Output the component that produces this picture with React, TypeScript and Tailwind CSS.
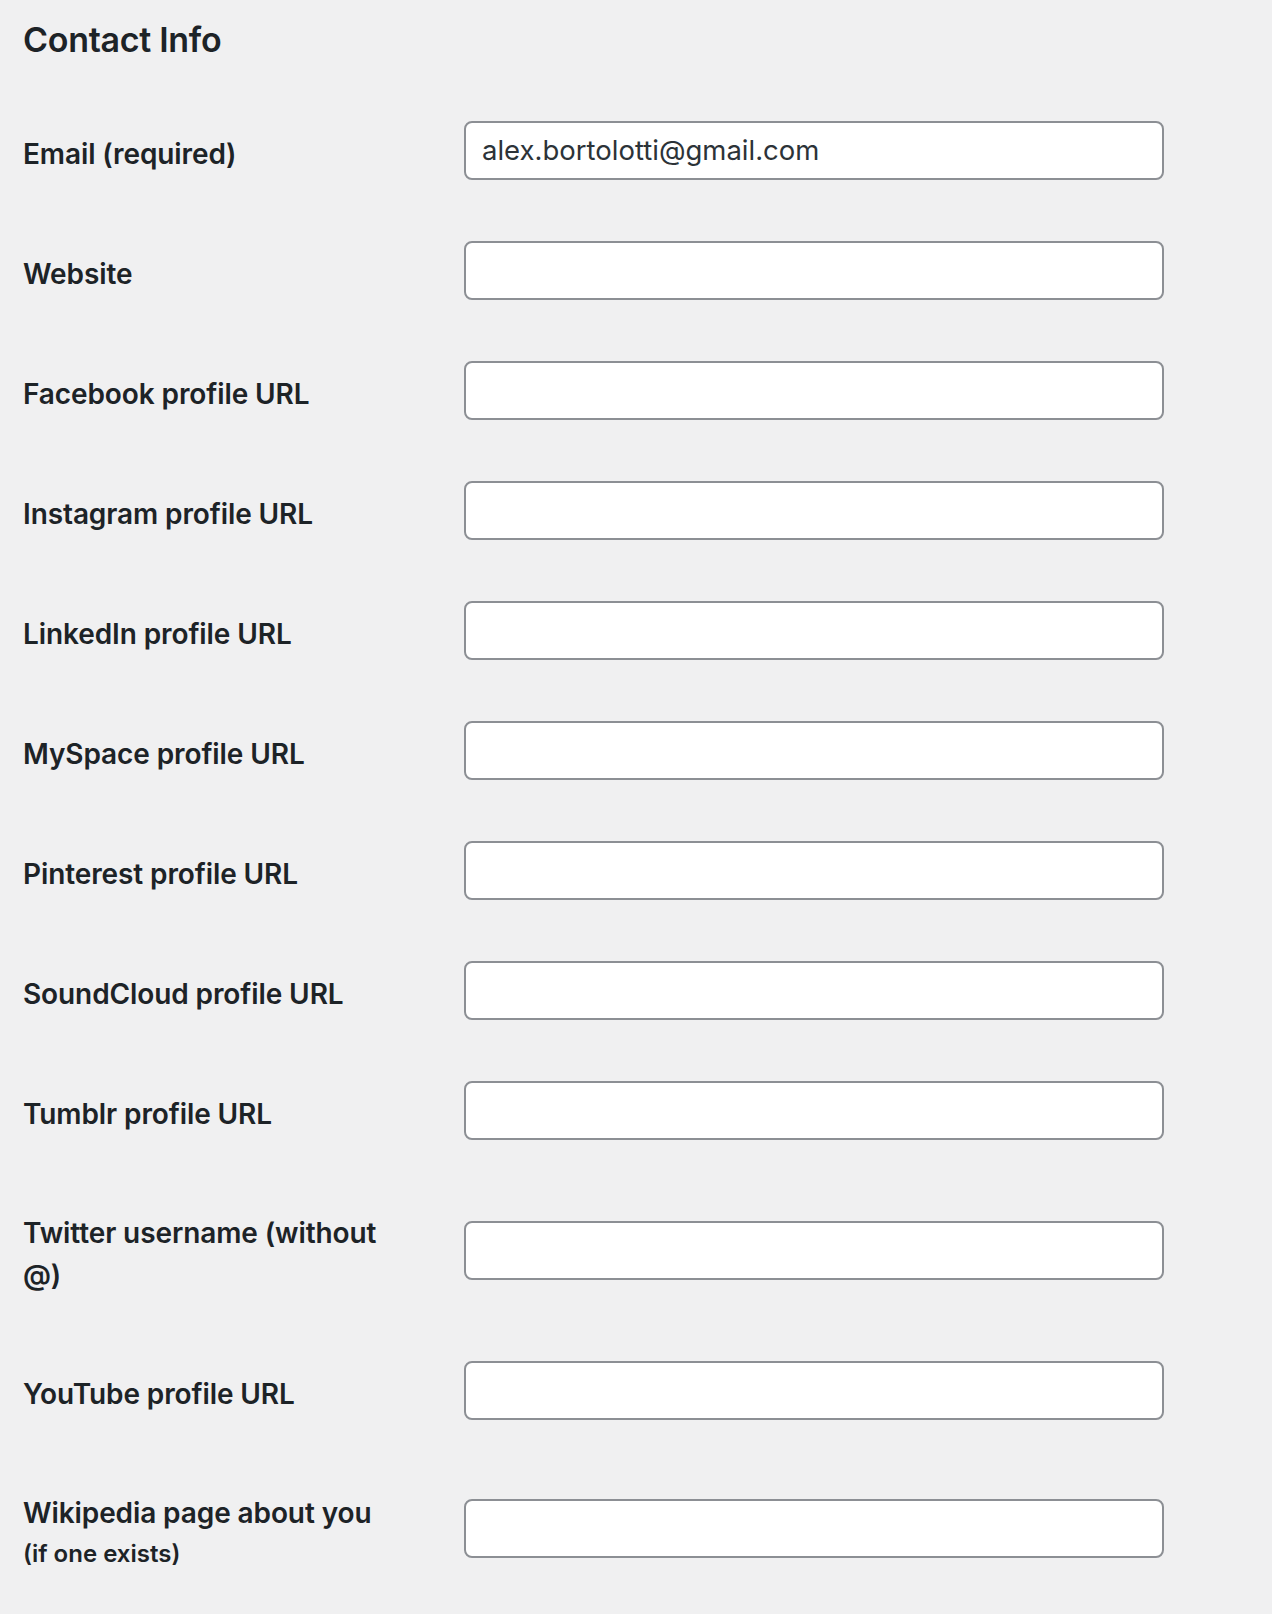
const fields = [
  { label: 'Email (required)', value: 'alex.bortolotti@gmail.com' },
  { label: 'Website' },
  { label: 'Facebook profile URL' },
  { label: 'Instagram profile URL' },
  { label: 'LinkedIn profile URL' },
  { label: 'MySpace profile URL' },
  { label: 'Pinterest profile URL' },
  { label: 'SoundCloud profile URL' },
  { label: 'Tumblr profile URL' },
  { label: 'Twitter username (without @)' },
  { label: 'YouTube profile URL' },
  { label: 'Wikipedia page about you', note: '(if one exists)' },
]

export default function App() {
  return (
    <div className="min-h-screen bg-[#f0f0f1] px-[23px] text-[#1d2327] font-['Inter','Noto_Sans',sans-serif]">
      <h2 className="pt-[18px] pb-[28px] text-[34px] leading-[44px] font-semibold tracking-[-0.3px]">
        Contact Info
      </h2>

      <div className="flex flex-col">
        {fields.map((f) => (
          <div key={f.label} className="flex items-center min-h-[120px]">
            <div className="w-[441px] shrink-0 pt-[42px] pb-[34px]">
              <div className="w-[388px] text-[28px] leading-[42px] font-semibold tracking-[-0.1px]">
                {f.label}
              </div>
              {f.note && (
                <div className="text-[24px] leading-[40px] font-semibold -mb-[2px]">{f.note}</div>
              )}
            </div>
            <input
              type="text"
              defaultValue={f.value ?? ''}
              className="w-[700px] h-[59px] rounded-[8px] border-2 border-[#8c8f94] bg-white px-[16px] text-[27.5px] text-[#2c3338] outline-none"
            />
          </div>
        ))}
      </div>
    </div>
  )
}
